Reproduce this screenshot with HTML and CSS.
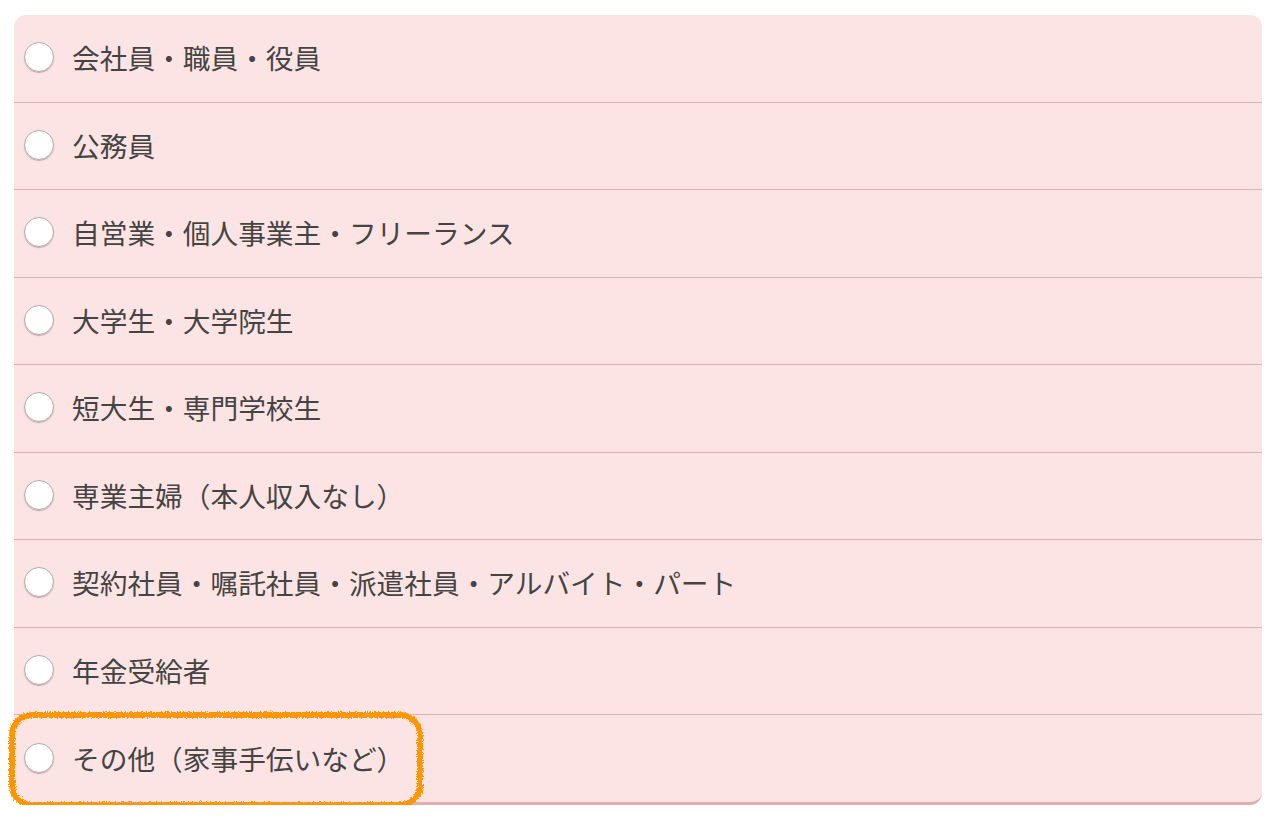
FILE: index.html
```html
<!DOCTYPE html>
<html lang="ja">
<head>
<meta charset="utf-8">
<link rel="stylesheet" href="styles.css">
</head>
<body>
<div class="page">
  <ul class="list">
    <li class="item"><span class="radio"></span><span class="label">会社員・職員・役員</span></li>
    <li class="item"><span class="radio"></span><span class="label">公務員</span></li>
    <li class="item"><span class="radio"></span><span class="label">自営業・個人事業主・フリーランス</span></li>
    <li class="item"><span class="radio"></span><span class="label">大学生・大学院生</span></li>
    <li class="item"><span class="radio"></span><span class="label">短大生・専門学校生</span></li>
    <li class="item"><span class="radio"></span><span class="label">専業主婦（本人収入なし）</span></li>
    <li class="item"><span class="radio"></span><span class="label">契約社員・嘱託社員・派遣社員・アルバイト・パート</span></li>
    <li class="item"><span class="radio"></span><span class="label">年金受給者</span></li>
    <li class="item last"><span class="radio"></span><span class="label">その他（家事手伝いなど）</span>
      <svg class="mark" width="424" height="104" viewBox="0 0 424 104">
        <defs>
          <filter id="rough" x="-5%" y="-10%" width="110%" height="120%">
            <feTurbulence type="fractalNoise" baseFrequency="0.8" numOctaves="2" seed="5" result="n"/>
            <feDisplacementMap in="SourceGraphic" in2="n" scale="5" xChannelSelector="R" yChannelSelector="G"/>
          </filter>
        </defs>
        <rect x="7" y="6" width="408" height="90" rx="20" ry="20" fill="none" stroke="#ff9500" stroke-width="6" filter="url(#rough)"/>
      </svg>
    </li>
  </ul>
</div>
</body>
</html>
```
FILE: styles.css
```css
html, body {
  margin: 0;
  padding: 0;
  background: #ffffff;
}
.page {
  padding: 15px 18px 0 14px;
}
.list {
  list-style: none;
  margin: 0;
  padding: 0;
  background: #fde4e4;
  border-radius: 12px;
  border-bottom: 3px solid #ddb0b0;
}
.item {
  position: relative;
  display: flex;
  align-items: center;
  height: 86.5px;
  border-bottom: 1px solid #dcb3b3;
  padding-left: 10px;
  box-sizing: content-box;
}
.item.last {
  border-bottom: none;
  height: 87px;
}
.radio {
  width: 28px;
  height: 28px;
  border-radius: 50%;
  border: 1px solid #b0acac;
  background: radial-gradient(circle at 50% 40%, #ffffff 60%, #f0eeee 100%);
  box-shadow: 0 1px 1px rgba(0,0,0,0.25);
  flex: none;
  margin-right: 18px;
  margin-top: -2px;
}
.label {
  font-family: "Noto Sans CJK JP", "Noto Sans", sans-serif;
  font-size: 27.7px;
  color: #444444;
  line-height: 1;
}
.mark {
  position: absolute;
  left: -9px;
  top: -6px;
  pointer-events: none;
}
```
